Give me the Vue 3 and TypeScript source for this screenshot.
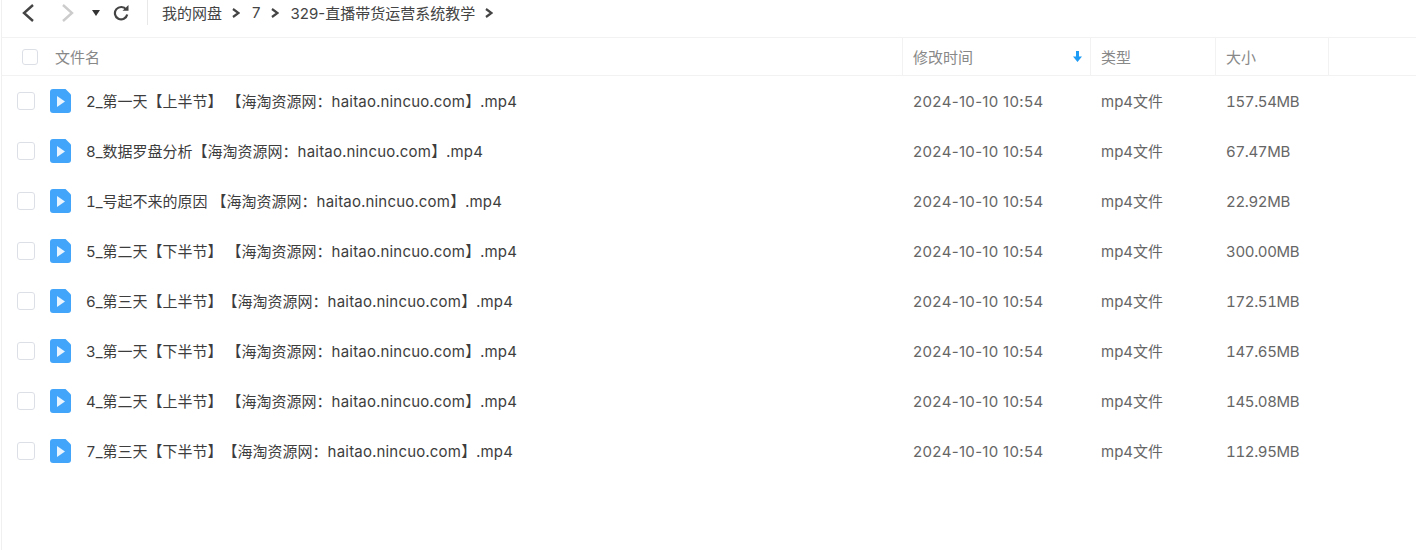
<template>
  <div class="page">
    <div class="toolbar">
      <div class="nav">
        <svg class="nav__icon nav__back" width="14" height="20" viewBox="0 0 14 20"><path d="M12 2 3 10l9 8" /></svg>
        <svg class="nav__icon nav__forward" width="14" height="20" viewBox="0 0 14 20"><path d="M2 2l9 8-9 8" /></svg>
        <svg class="nav__caret" width="10" height="8" viewBox="0 0 10 8"><path d="M1 1h8L5 7z" /></svg>
        <svg class="nav__icon nav__reload" width="16" height="16" viewBox="0 0 16 16">
          <path d="M13.200 4.600A6.200 6.200 0 1 0 14.200 9.500" />
          <path class="nav__arrow" d="M9.500 5.800h6V0z" />
        </svg>
      </div>
      <div class="crumbs">
        <template v-for="c in crumbs" :key="c">
          <span class="crumbs__name">{{ c }}</span>
          <svg class="crumbs__sep" width="8" height="10" viewBox="0 0 8 10"><path d="M1 1 6.500 5 1 9" /></svg>
        </template>
      </div>
    </div>

    <div class="row row--head">
      <div class="cell cell--name">
        <span class="check check--head"></span>
        <span class="head-label">文件名</span>
      </div>
      <div class="cell cell--time">
        <span class="head-label">修改时间</span>
        <svg class="sort" width="9" height="11" viewBox="0 0 9 11"><path d="M3 0h3v5.500h3L4.500 11 0 5.500h3z" /></svg>
      </div>
      <div class="cell cell--type"><span class="head-label">类型</span></div>
      <div class="cell cell--size"><span class="head-label">大小</span></div>
      <div class="cell cell--rest"></div>
    </div>

    <div v-for="f in files" :key="f.name" class="row row--file">
      <div class="cell cell--name">
        <span class="check"></span>
        <svg class="file-icon" width="21" height="24" viewBox="0 0 21 24">
          <path class="file-icon__body" d="M3 0h12.500L21 5.500V21a3 3 0 0 1-3 3H3a3 3 0 0 1-3-3V3a3 3 0 0 1 3-3z" />
          <path class="file-icon__play" d="M7 7 15 12.500 7 18z" />
        </svg>
        <span class="file-name">
          <span v-for="(part, i) in splitName(f.name)" :key="i" :class="{ latin: i % 2 === 1 }">{{ part }}</span>
        </span>
      </div>
      <div class="cell cell--time cell--num">2024-10-10 10:54</div>
      <div class="cell cell--type">mp4文件</div>
      <div class="cell cell--size cell--num">{{ f.size }}</div>
    </div>
  </div>
</template>

<script setup lang="ts">
interface FileRow {
  name: string
  size: string
}

const crumbs = ['我的网盘', '7', '329-直播带货运营系统教学']

const files: FileRow[] = [
  { name: '2_第一天【上半节】 【海淘资源网：haitao.nincuo.com】.mp4', size: '157.54MB' },
  { name: '8_数据罗盘分析【海淘资源网：haitao.nincuo.com】.mp4', size: '67.47MB' },
  { name: '1_号起不来的原因 【海淘资源网：haitao.nincuo.com】.mp4', size: '22.92MB' },
  { name: '5_第二天【下半节】 【海淘资源网：haitao.nincuo.com】.mp4', size: '300.00MB' },
  { name: '6_第三天【上半节】【海淘资源网：haitao.nincuo.com】.mp4', size: '172.51MB' },
  { name: '3_第一天【下半节】 【海淘资源网：haitao.nincuo.com】.mp4', size: '147.65MB' },
  { name: '4_第二天【上半节】 【海淘资源网：haitao.nincuo.com】.mp4', size: '145.08MB' },
  { name: '7_第三天【下半节】【海淘资源网：haitao.nincuo.com】.mp4', size: '112.95MB' }
]

// 拉丁字符段单独加字距, 奇数下标为匹配到的部分
function splitName(name: string): string[] {
  return name.split(/([a-z0-9.]{3,})/)
}
</script>

<style>
html,
body {
  background: #fff;
  overflow: hidden;
}
</style>

<style scoped>
.page {
  height: 550px;
  margin-left: 1px;
  border-left: 1px solid #f0f0f0;
  font-family: Inter, 'Noto Sans CJK SC', sans-serif;
  font-size: 15px;
  color: #666;
  background: #fff;
  text-spacing-trim: space-all;
  font-kerning: none;
}

.toolbar {
  display: flex;
  align-items: flex-start;
  height: 37px;
  border-bottom: 1px solid #f2f2f2;
  padding-left: 19px;
}

.nav {
  display: flex;
  align-items: center;
  height: 25px;
  width: 126px;
  border-right: 1px solid #e8e8e8;
  margin-right: 14px;
  flex-shrink: 0;
}

.nav__icon {
  fill: none;
  stroke-width: 2.4;
}

.nav__back {
  stroke: #444;
  margin-right: 26px;
}

.nav__forward {
  stroke: #ccc;
  margin-right: 16px;
}

.nav__caret {
  fill: #333;
  margin-right: 12px;
}

.nav__reload {
  stroke: #444;
  stroke-width: 2.2;
}

.nav__arrow {
  fill: #444;
  stroke: none;
}

.crumbs {
  display: flex;
  align-items: center;
  height: 25px;
  color: #444;
}

.crumbs__sep {
  fill: none;
  stroke: #444;
  stroke-width: 2.2;
  margin: 0 12px 0 10px;
}

.row {
  display: flex;
  align-items: center;
}

.row--head {
  height: 37px;
  border-bottom: 1px solid #f2f2f2;
}

.row--file {
  height: 50px;
}

.row--file .cell {
  padding-bottom: 1px;
}

.row--file .cell--num {
  padding-bottom: 0;
}

.row--file .cell--time {
  letter-spacing: 0.32px;
}

.row--file .cell--size {
  font-variant-numeric: tabular-nums;
  letter-spacing: -0.35px;
}

.cell {
  display: flex;
  align-items: center;
  height: 100%;
  flex-shrink: 0;
  padding-left: 10px;
  box-sizing: border-box;
}

.row--head .cell {
  border-right: 1px solid #f2f2f2;
}

.cell--name {
  width: 901px;
  padding-left: 15px;
}

.cell--time {
  width: 188px;
  justify-content: space-between;
  padding-right: 8px;
}

.cell--type {
  width: 125px;
}

.cell--size {
  width: 113px;
}

.row--head .cell--rest {
  border-right: none;
  flex: 1;
}

.head-label {
  color: #888;
}

.check {
  width: 18px;
  height: 18px;
  box-sizing: border-box;
  border: 1px solid #dcdfe6;
  border-radius: 3px;
  margin-right: 15px;
  flex-shrink: 0;
}

.check--head {
  width: 16px;
  height: 16px;
  margin-left: 5px;
  margin-right: 17px;
}

.file-icon {
  margin-right: 15px;
  flex-shrink: 0;
}

.file-icon__body {
  fill: #42a5fa;
}

.file-icon__play {
  fill: #e8f4ff;
}

.file-name {
  color: #3d3d3d;
  white-space: pre;
  font-variant-numeric: tabular-nums;
}

.latin {
  letter-spacing: 0.22px;
}

.sort {
  fill: #1e9bf5;
}
</style>
